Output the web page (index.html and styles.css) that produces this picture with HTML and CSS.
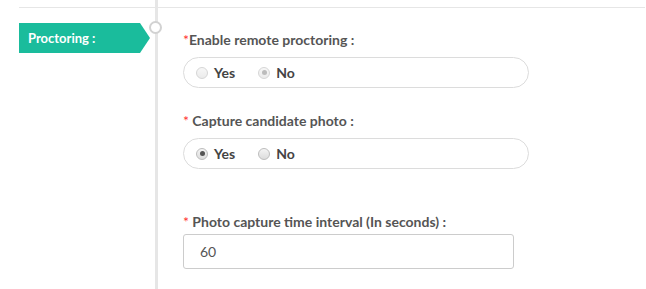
FILE: index.html
```html
<!DOCTYPE html>
<html>
<head>
<meta charset="utf-8">
<link rel="stylesheet" href="styles.css">
</head>
<body>
<div class="page">
  <aside class="side">
    <div class="rule side-rule"></div>
    <div class="tag">Proctoring :</div>
  </aside>
  <div class="timeline"><span class="node"></span></div>
  <main class="content">
    <div class="rule"></div>
    <div class="field first">
      <div class="label"><span class="req">*</span>Enable remote proctoring :</div>
      <div class="pill">
        <label class="opt"><span class="radio disabled"></span>Yes</label>
        <label class="opt"><span class="radio disabled checked"></span>No</label>
      </div>
    </div>
    <div class="field">
      <div class="label"><span class="req">*</span> Capture candidate photo :</div>
      <div class="pill">
        <label class="opt"><span class="radio checked"></span>Yes</label>
        <label class="opt"><span class="radio"></span>No</label>
      </div>
    </div>
    <div class="field last">
      <div class="label"><span class="req">*</span> Photo capture time interval (In seconds) :</div>
      <div class="input">60</div>
    </div>
  </main>
</div>
</body>
</html>
```
FILE: styles.css
```css
html, body {
  margin: 0;
  padding: 0;
  background: #fff;
}
body {
  font-family: Lato, "Open Sans", sans-serif;
  color: #555;
}
.page {
  display: flex;
  min-height: 100vh;
}
.side {
  width: 155px;
  flex: none;
}
.rule {
  margin-top: 7px;
  border-top: 1px solid #e6e6e6;
}
.side-rule {
  margin-left: 19px;
}
.tag {
  margin: 15px 0 0 19px;
  width: 131px;
  height: 30px;
  box-sizing: border-box;
  padding-left: 9px;
  background: #1abc9c;
  color: #fff;
  font-size: 13px;
  font-weight: 700;
  line-height: 30px;
  clip-path: polygon(0 0, 121px 0, 131px 15px, 121px 30px, 0 30px);
}
.timeline {
  position: relative;
  width: 3px;
  flex: none;
  background: #e6e6e6;
}
.node {
  position: absolute;
  left: -6px;
  top: 21px;
  width: 9px;
  height: 9px;
  border: 2px solid #d2d2d2;
  border-radius: 50%;
  background: #fff;
}
.content {
  flex: 1;
  padding-left: 25px;
  padding-right: 1px;
}
.content > .rule {
  margin-left: -25px;
}
.field {
  margin-top: 25px;
}
.field.first {
  margin-top: 24px;
}
.field.last {
  margin-top: 45px;
}
.label {
  font-size: 14px;
  font-weight: 700;
  line-height: 16px;
  color: #555;
}
.req {
  color: #f33;
  font-weight: 400;
}
.pill {
  margin-top: 9px;
  width: 346px;
  height: 31px;
  box-sizing: border-box;
  border: 1px solid #dcdcdc;
  border-radius: 16px;
  display: flex;
  align-items: center;
  padding-left: 12px;
  gap: 23px;
}
.opt {
  display: flex;
  align-items: center;
  gap: 6px;
  font-size: 14px;
  font-weight: 700;
  color: #444;
}
.radio {
  width: 12px;
  height: 12px;
  box-sizing: border-box;
  border: 1px solid #bdbdbd;
  border-radius: 50%;
  background: linear-gradient(#f4f4f4, #dcdcdc);
  display: flex;
  align-items: center;
  justify-content: center;
}
.radio.disabled {
  border-color: #d6d6d6;
  background: linear-gradient(#f7f7f7, #ebebeb);
}
.radio.checked::after {
  content: "";
  width: 5px;
  height: 5px;
  border-radius: 50%;
  background: #555;
}
.radio.disabled.checked::after {
  background: #bcbcbc;
}
.field.last .label {
  margin-bottom: 4px;
}
.input {
  width: 331px;
  height: 35px;
  box-sizing: border-box;
  border: 1px solid #ccc;
  border-radius: 3px;
  padding-left: 16px;
  font-size: 14px;
  line-height: 33px;
  color: #555;
}
```
